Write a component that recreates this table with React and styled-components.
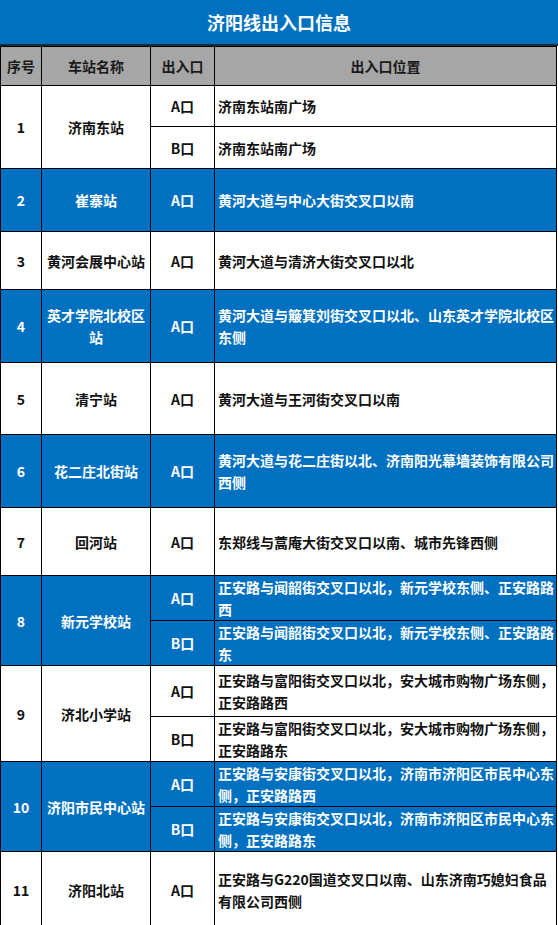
import React from "react";
import styled, { createGlobalStyle } from "styled-components";

const GlobalStyle = createGlobalStyle`
  html, body {
    margin: 0;
    padding: 0;
    background: #ffffff;
  }
  body {
    font-family: "Noto Sans CJK SC", "Noto Sans", sans-serif;
  }
`;

const BLUE = "#0070c0";

const Page = styled.div`
  width: 558px;
`;

const TitleBar = styled.div`
  height: 44px;
  background: ${BLUE};
  color: #ffffff;
  font-size: 18px;
  font-weight: 700;
  display: flex;
  align-items: center;
  justify-content: center;
  border-bottom: 2px solid #1a2a3a;
`;

const Table = styled.table`
  width: 557px;
  border-collapse: collapse;
  table-layout: fixed;
  font-size: 14px;
  font-weight: 700;
  line-height: 22px;
`;

const HeadCell = styled.th`
  height: 38px;
  padding: 0;
  background: #a6a6a6;
  color: #1a1a1a;
  font-weight: 700;
  border: 1px solid #000;
  text-align: center;
  vertical-align: middle;
`;

const Row = styled.tr`
  background: ${(p) => (p.$blue ? BLUE : "#ffffff")};
  color: ${(p) => (p.$blue ? "#ffffff" : "#111111")};
`;

const Cell = styled.td`
  border: 1px solid #000;
  padding: ${(p) => (p.$left ? "0 0 0 3px" : "0 2px")};
  text-align: ${(p) => (p.$left ? "left" : "center")};
  vertical-align: middle;
  height: ${(p) => p.$h}px;
  word-break: break-all;
`;

const stations = [
  {
    no: 1,
    name: "济南东站",
    exits: [
      { gate: "A口", pos: "济南东站南广场", h: 40 },
      { gate: "B口", pos: "济南东站南广场", h: 41 },
    ],
  },
  { no: 2, name: "崔寨站", blue: true, exits: [{ gate: "A口", pos: "黄河大道与中心大街交叉口以南", h: 62 }] },
  { no: 3, name: "黄河会展中心站", exits: [{ gate: "A口", pos: "黄河大道与清济大街交叉口以北", h: 57 }] },
  {
    no: 4,
    name: "英才学院北校区站",
    blue: true,
    exits: [{ gate: "A口", pos: "黄河大道与簸箕刘街交叉口以北、山东英才学院北校区东侧", h: 72 }],
  },
  { no: 5, name: "清宁站", exits: [{ gate: "A口", pos: "黄河大道与王河街交叉口以南", h: 71 }] },
  {
    no: 6,
    name: "花二庄北街站",
    blue: true,
    exits: [{ gate: "A口", pos: "黄河大道与花二庄街以北、济南阳光幕墙装饰有限公司西侧", h: 72 }],
  },
  { no: 7, name: "回河站", exits: [{ gate: "A口", pos: "东郑线与蒿庵大街交叉口以南、城市先锋西侧", h: 67 }] },
  {
    no: 8,
    name: "新元学校站",
    blue: true,
    exits: [
      { gate: "A口", pos: "正安路与闻韶街交叉口以北，新元学校东侧、正安路路西", h: 43 },
      { gate: "B口", pos: "正安路与闻韶街交叉口以北，新元学校东侧、正安路路东", h: 42 },
    ],
  },
  {
    no: 9,
    name: "济北小学站",
    exits: [
      { gate: "A口", pos: "正安路与富阳街交叉口以北，安大城市购物广场东侧，正安路路西", h: 50 },
      { gate: "B口", pos: "正安路与富阳街交叉口以北，安大城市购物广场东侧，正安路路东", h: 43 },
    ],
  },
  {
    no: 10,
    name: "济阳市民中心站",
    blue: true,
    exits: [
      { gate: "A口", pos: "正安路与安康街交叉口以北，济南市济阳区市民中心东侧，正安路路西", h: 42 },
      { gate: "B口", pos: "正安路与安康街交叉口以北，济南市济阳区市民中心东侧，正安路路东", h: 43 },
    ],
  },
  {
    no: 11,
    name: "济阳北站",
    exits: [{ gate: "A口", pos: "正安路与G220国道交叉口以南、山东济南巧媳妇食品有限公司西侧", h: 76 }],
  },
];

export default function App() {
  return (
    <Page>
      <GlobalStyle />
      <TitleBar>济阳线出入口信息</TitleBar>
      <Table>
        <colgroup>
          <col style={{ width: 41 }} />
          <col style={{ width: 109 }} />
          <col style={{ width: 64 }} />
          <col />
        </colgroup>
        <thead>
          <tr>
            <HeadCell>序号</HeadCell>
            <HeadCell>车站名称</HeadCell>
            <HeadCell>出入口</HeadCell>
            <HeadCell>出入口位置</HeadCell>
          </tr>
        </thead>
        <tbody>
          {stations.map((s) =>
            s.exits.map((e, i) => (
              <Row key={`${s.no}-${e.gate}`} $blue={s.blue}>
                {i === 0 && (
                  <>
                    <Cell rowSpan={s.exits.length}>{s.no}</Cell>
                    <Cell rowSpan={s.exits.length}>{s.name}</Cell>
                  </>
                )}
                <Cell $h={e.h}>{e.gate}</Cell>
                <Cell $h={e.h} $left>
                  {e.pos}
                </Cell>
              </Row>
            ))
          )}
        </tbody>
      </Table>
    </Page>
  );
}
